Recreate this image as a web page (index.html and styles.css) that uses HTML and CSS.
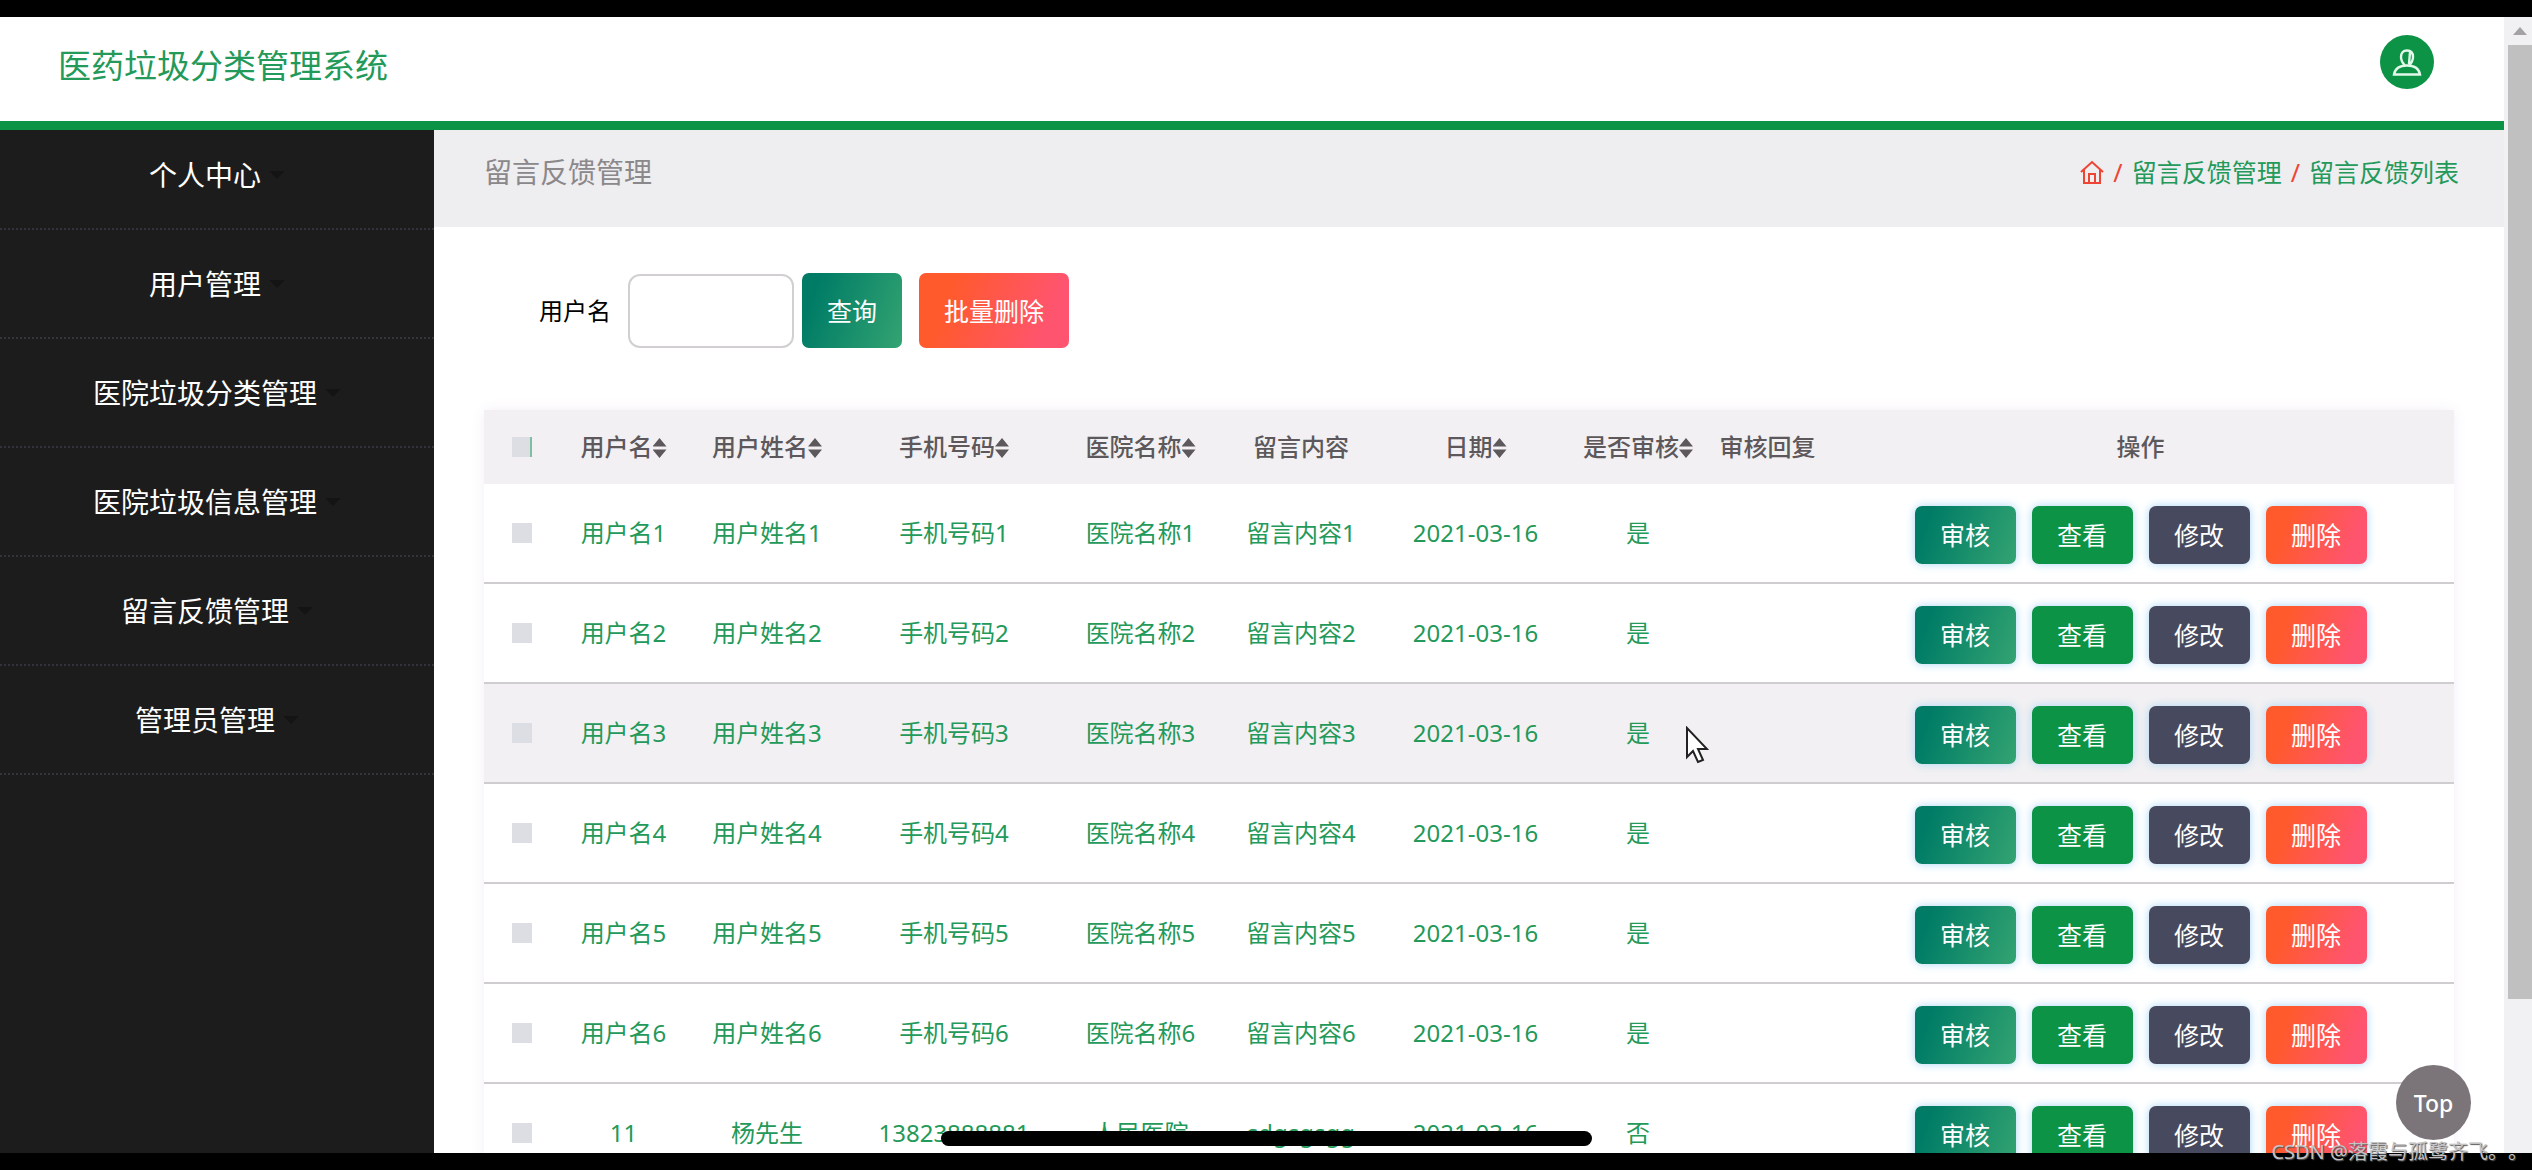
FILE: index.html
```html
<!DOCTYPE html>
<html lang="zh-CN">
<head>
<meta charset="utf-8">
<title>医药垃圾分类管理系统</title>
<link rel="stylesheet" href="styles.css">
</head>
<body>
<div class="screen">
  <div class="page">
    <header class="header">
      <h1 class="brand">医药垃圾分类管理系统</h1>
      <button class="avatar" type="button" aria-label="个人中心">
        <svg viewBox="0 0 30 30" width="30" height="30" fill="none" stroke="#e2f8e8" stroke-width="2.400"><path d="M15 3.500c-4 0-6 2.500-6 6.500 0 3.500 2 6.500 4 8.500h4c2-2 4-5 4-8.500 0-4-2-6.500-6-6.500zM18 5l-1 12M2 27.500c1-6 6-9 13-9s12 3 13 9z"/></svg>
      </button>
    </header>
    <div class="body">
      <nav class="sidebar">
        <a class="menu-item" href="#">个人中心<i class="caret"></i></a>
        <a class="menu-item" href="#">用户管理<i class="caret"></i></a>
        <a class="menu-item" href="#">医院垃圾分类管理<i class="caret"></i></a>
        <a class="menu-item" href="#">医院垃圾信息管理<i class="caret"></i></a>
        <a class="menu-item" href="#">留言反馈管理<i class="caret"></i></a>
        <a class="menu-item" href="#">管理员管理<i class="caret"></i></a>
      </nav>
      <main class="content">
        <div class="titlebar">
          <h2 class="title">留言反馈管理</h2>
          <div class="crumbs">
            <a class="home" href="#" aria-label="首页"><svg viewBox="0 0 24 24" width="24" height="24" fill="none" stroke="#ee4433" stroke-width="2"><path d="M1 12 12 2l11 10M4 10v13h16V10M9 23v-9h6v9"/></svg></a>
            <span class="slash">/</span>
            <a href="#">留言反馈管理</a>
            <span class="slash">/</span>
            <a href="#">留言反馈列表</a>
          </div>
        </div>
        <form class="search">
          <label for="username">用户名</label>
          <input class="field" id="username" type="text">
          <button class="btn btn-teal" type="button">查询</button>
          <button class="btn btn-red" type="button">批量删除</button>
        </form>
        <table class="list">
          <colgroup><col class="c-check"><col class="c-user"><col class="c-name"><col class="c-phone"><col class="c-hospital"><col class="c-message"><col class="c-date"><col class="c-state"><col class="c-reply"><col class="c-actions"></colgroup>
          <thead>
            <tr>
              <th><input class="tick tick-all" type="checkbox" aria-label="全选"></th>
              <th>用户名<i class="sort"></i></th>
              <th>用户姓名<i class="sort"></i></th>
              <th>手机号码<i class="sort"></i></th>
              <th>医院名称<i class="sort"></i></th>
              <th>留言内容</th>
              <th>日期<i class="sort"></i></th>
              <th>是否审核<i class="sort"></i></th>
              <th>审核回复</th>
              <th>操作</th>
            </tr>
          </thead>
          <tbody id="rows"></tbody>
        </table>
      </main>
    </div>
    <button class="to-top" type="button">Top</button>
  </div>
  <div class="scrollbar"><i class="scroll-up"></i><div class="thumb"></div></div>
  <svg class="pointer" viewBox="0 0 24 38" width="24" height="38"><path d="M2 2v29l6-6 5 11 5-2-5-11h9z" fill="#fff" stroke="#222" stroke-width="2"/></svg>
</div>
<div class="home-bar"></div>
<div class="watermark">CSDN @落霞与孤鹭齐飞。。</div>
<script src="rows.js"></script>
</body>
</html>
```
FILE: rows.js
```js
const records = [];
for (let i = 1; i <= 6; i++) {
  records.push(['用户名' + i, '用户姓名' + i, '手机号码' + i, '医院名称' + i, '留言内容' + i, '2021-03-16', '是', '']);
}
records.push(['11', '杨先生', '13823888881', '人民医院', 'sdgsgsgg', '2021-03-16', '否', '']);

const actions = [['审核', 'btn-teal'], ['查看', 'btn-green'], ['修改', 'btn-slate'], ['删除', 'btn-red']];
const buttons = actions
  .map(([label, tone]) => `<button class="btn btn-small ${tone}" type="button">${label}</button>`)
  .join('');

document.getElementById('rows').innerHTML = records
  .map((cells, i) => `<tr class="${i === 2 ? 'hover' : ''}">
    <td><input class="tick" type="checkbox" aria-label="选择 ${cells[0]}"></td>
    ${cells.map(text => `<td>${text}</td>`).join('')}
    <td><div class="actions">${buttons}</div></td>
  </tr>`)
  .join('');
```
FILE: styles.css
```css
* { box-sizing: border-box; }

body {
  margin: 0;
  height: 100vh;
  padding: 17px 0;
  background: #000;
  overflow: hidden;
  position: relative;
  font-family: "Noto Sans", "Noto Sans CJK SC", sans-serif;
  font-size: 24px;
  line-height: 32px;
}

button, input { font: inherit; }
button { border: 0; padding: 0; color: #fff; cursor: pointer; }
a { color: inherit; text-decoration: none; }
h1, h2 { margin: 0; font-weight: 400; }

.screen {
  position: relative;
  display: flex;
  height: 100%;
  overflow: hidden;
  background: #fff;
}

.page {
  position: relative;
  flex: 1;
  min-width: 0;
  display: flex;
  flex-direction: column;
}

.header {
  flex: none;
  display: flex;
  justify-content: space-between;
  align-items: flex-start;
  height: 113px;
  padding: 18px 70px 0 58px;
  border-bottom: 9px solid #0c9346;
}
.brand { font-size: 33px; line-height: 62px; color: #23995a; }
.avatar {
  display: flex;
  align-items: center;
  justify-content: center;
  width: 54px;
  height: 54px;
  border-radius: 50%;
  background: #0c9346;
}

.body { flex: 1; min-height: 0; display: flex; }

.sidebar {
  flex: none;
  width: 434px;
  background: #1c1c1c;
}
.menu-item {
  display: flex;
  align-items: center;
  justify-content: center;
  gap: 8px;
  height: 109px;
  border-bottom: 2px dotted #34323c;
  color: #fff;
  font-size: 28px;
}
.menu-item:first-child { height: 100px; padding-bottom: 8px; }
.caret {
  border: 8px solid transparent;
  border-top-color: #141414;
  border-bottom: 0;
}

.content { flex: 1; min-width: 0; }

.titlebar {
  display: flex;
  justify-content: space-between;
  height: 97px;
  padding: 26px 45px 0 50px;
  background: #eeedef;
}
.title { font-size: 28px; line-height: 32px; color: #8b888b; }
.crumbs {
  display: flex;
  gap: 9px;
  height: 32px;
  font-size: 25px;
  color: #23995a;
}
.home { display: flex; align-items: center; }
.slash { color: #ee4433; }

.search {
  display: flex;
  align-items: center;
  padding: 46px 0 62px 105px;
}
.field {
  width: 166px;
  height: 74px;
  margin: 0 8px 0 17px;
  padding: 0 16px;
  border: 2px solid #d2cfd3;
  border-radius: 12px;
  background: #fff;
}

.btn {
  height: 75px;
  padding: 0 25px;
  margin-right: 17px;
  border-radius: 7px;
  font-size: 25px;
}
.btn-teal { background: linear-gradient(110deg, #007c66 15%, #33a371); }
.btn-red { background: linear-gradient(110deg, #ff5a2c 20%, #ff5470 85%); }
.btn-green { background: #0c9346; }
.btn-slate { background: #474a5e; }
.btn-small {
  width: 101px;
  height: 58px;
  margin: 0;
  box-shadow: 0 0 10px #a9d6f5;
}

.list {
  width: calc(100% - 100px);
  margin-left: 50px;
  table-layout: fixed;
  border-collapse: separate;
  border-spacing: 0;
  text-align: center;
  box-shadow: 0 0 14px #f3eef6;
}
.c-check { width: 75px; }
.c-user { width: 129px; }
.c-name { width: 158px; }
.c-phone { width: 216px; }
.c-hospital { width: 157px; }
.c-message { width: 164px; }
.c-date { width: 185px; }
.c-state { width: 140px; }
.c-reply { width: 119px; }
.c-actions { width: 627px; }

.list th, .list td { padding: 0; white-space: nowrap; }
.list th {
  height: 74px;
  background: #f2f0f2;
  color: #5c585b;
  font-weight: 500;
}
.list td {
  height: 100px;
  border-bottom: 2px solid #cfcdd0;
  color: #23995a;
}
.hover td { background: #f2f0f2; }

.sort {
  display: inline-block;
  width: 14px;
  height: 20px;
  vertical-align: -2px;
  background: #5c585b;
  clip-path: polygon(50% 0, 100% 42%, 0 42%, 0 58%, 100% 58%, 50% 100%, 0 58%, 0 42%);
}

.tick {
  appearance: none;
  display: block;
  width: 20px;
  height: 20px;
  margin: 0 auto;
  background: #dddee3;
}
.tick-all { border-right: 2px solid #7fbf9f; }

.actions {
  display: flex;
  justify-content: center;
  gap: 16px;
  padding-top: 4px;
}

.to-top {
  position: absolute;
  right: 33px;
  bottom: 13px;
  width: 75px;
  height: 75px;
  border-radius: 50%;
  background: #7b7579;
  font-size: 23px;
  font-weight: 500;
}

.scrollbar {
  flex: none;
  width: 28px;
  padding-left: 4px;
  background: #f1f0f2;
}
.scroll-up {
  display: block;
  width: 14px;
  margin: 10px 5px 10px;
  border: 7px solid transparent;
  border-top: 0;
  border-bottom: 8px solid #a4a2a4;
}
.thumb { height: 84%; background: #c1c0c1; }

.pointer { position: absolute; left: 1685px; top: 709px; }

.home-bar {
  position: absolute;
  left: 50%;
  bottom: 24px;
  width: 651px;
  height: 15px;
  margin-left: -325px;
  border-radius: 8px;
  background: #000;
}

.watermark {
  position: absolute;
  right: 4px;
  bottom: 2px;
  color: #c4c2c4;
  font-size: 20px;
  text-spacing-trim: space-all;
  text-shadow: 1px 1px 1px #555;
}
```
